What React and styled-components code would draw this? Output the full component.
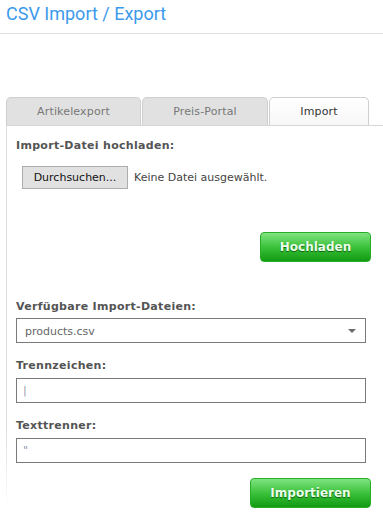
import React from "react";
import styled, { createGlobalStyle } from "styled-components";

const Global = createGlobalStyle`
  html, body { margin: 0; padding: 0; background: #fff; }
  body { font-family: "DejaVu Sans", Verdana, sans-serif; }
  * { box-sizing: border-box; }
`;

const Page = styled.div`
  width: 383px;
  min-height: 523px;
  background: #fff;
`;

const Header = styled.header`
  height: 34px;
  padding: 3px 6px 0;
  border-bottom: 1px solid #e3e3e3;
`;

const Title = styled.h1`
  margin: 0;
  font-family: Roboto, "Liberation Sans", Arial, sans-serif;
  font-weight: 400;
  font-size: 18px;
  line-height: 22px;
  color: #3b9aeb;
`;

const Content = styled.main`
  padding: 63px 0 0 6px;
`;

const Tabs = styled.nav`
  display: flex;
  height: 28px;
`;

const Tab = styled.div`
  width: ${(p) => p.$w}px;
  height: 28px;
  margin-right: 1px;
  display: flex;
  align-items: center;
  justify-content: center;
  font-size: 11px;
  letter-spacing: 0.15px;
  color: ${(p) => (p.$active ? "#333" : "#777")};
  background: ${(p) =>
    p.$active ? "linear-gradient(#ffffff, #f7f7f7)" : "#e1e1e1"};
  border: 1px solid #cfcfcf;
  border-bottom: none;
  border-radius: 5px 5px 0 0;
`;

const Panel = styled.section`
  border-top: 1px solid #d6d6d6;
  padding: 13px 12px 2px 10px;
  min-height: 385px;
  background: linear-gradient(#dcdcdc, #dcdcdc 78%, rgba(255, 255, 255, 0))
    left top / 1px 100% no-repeat;
`;

const Label = styled.label`
  display: block;
  font-size: 11px;
  line-height: 14px;
  font-weight: 700;
  letter-spacing: 0.3px;
  color: #545454;
  margin: ${(p) => p.$m || "0"};
`;

const FileRow = styled.div`
  display: flex;
  align-items: center;
  gap: 6px;
  margin: 13px 0 0 6px;
`;

const BrowseButton = styled.button`
  height: 23px;
  width: 106px;
  padding: 0;
  font-family: "DejaVu Sans", Verdana, sans-serif;
  font-size: 11px;
  color: #111;
  background: #e1e1e1;
  border: 1px solid #adadad;
  border-radius: 0;
`;

const FileText = styled.span`
  font-size: 11px;
  color: #444;
`;

const Actions = styled.div`
  display: flex;
  justify-content: flex-end;
  margin: ${(p) => p.$m};
`;

const GreenButton = styled.button`
  width: ${(p) => p.$w}px;
  height: 30px;
  padding: 0;
  font-family: "DejaVu Sans", Verdana, sans-serif;
  font-weight: 700;
  font-size: 12px;
  color: #eaffea;
  text-shadow: 0 1px 1px #0b5e0b;
  background: linear-gradient(#80e480, #3cc23c 50%, #129a12);
  border: 1px solid #27ad27;
  border-radius: 4px;
`;

const SelectBox = styled.div`
  position: relative;
  width: 350px;
  height: 25px;
  border: 1px solid #7a7a7a;
  display: flex;
  align-items: center;
  padding: 2px 0 0 8px;
  font-size: 11px;
  color: #666;
`;

const Caret = styled.span`
  position: absolute;
  right: 9px;
  top: 10px;
  width: 0;
  height: 0;
  border-left: 4px solid transparent;
  border-right: 4px solid transparent;
  border-top: 4px solid #6a6a6a;
`;

const TextInput = styled.input`
  display: block;
  width: 350px;
  height: 25px;
  border: 1px solid #7a7a7a;
  padding: 0 6px;
  font-family: "DejaVu Sans", Verdana, sans-serif;
  font-size: 11px;
  color: #8f9aa8;
  background: #fff;
  outline: none;
`;

export default function App() {
  return (
    <Page>
      <Global />
      <Header>
        <Title>CSV Import / Export</Title>
      </Header>
      <Content>
        <Tabs>
          <Tab $w={135}>Artikelexport</Tab>
          <Tab $w={126}>Preis-Portal</Tab>
          <Tab $w={100} $active>
            Import
          </Tab>
        </Tabs>
        <Panel>
          <Label>Import-Datei hochladen:</Label>
          <FileRow>
            <BrowseButton>Durchsuchen...</BrowseButton>
            <FileText>Keine Datei ausgewählt.</FileText>
          </FileRow>
          <Actions $m="43px 0 0">
            <GreenButton $w={111}>Hochladen</GreenButton>
          </Actions>
          <Label $m="38px 0 4px">Verfügbare Import-Dateien:</Label>
          <SelectBox>
            products.csv
            <Caret />
          </SelectBox>
          <Label $m="16px 0 5px">Trennzeichen:</Label>
          <TextInput readOnly value="|" />
          <Label $m="16px 0 5px">Texttrenner:</Label>
          <TextInput readOnly value={'"'} />
          <Actions $m="15px 0 0">
            <GreenButton $w={121}>Importieren</GreenButton>
          </Actions>
        </Panel>
      </Content>
    </Page>
  );
}
